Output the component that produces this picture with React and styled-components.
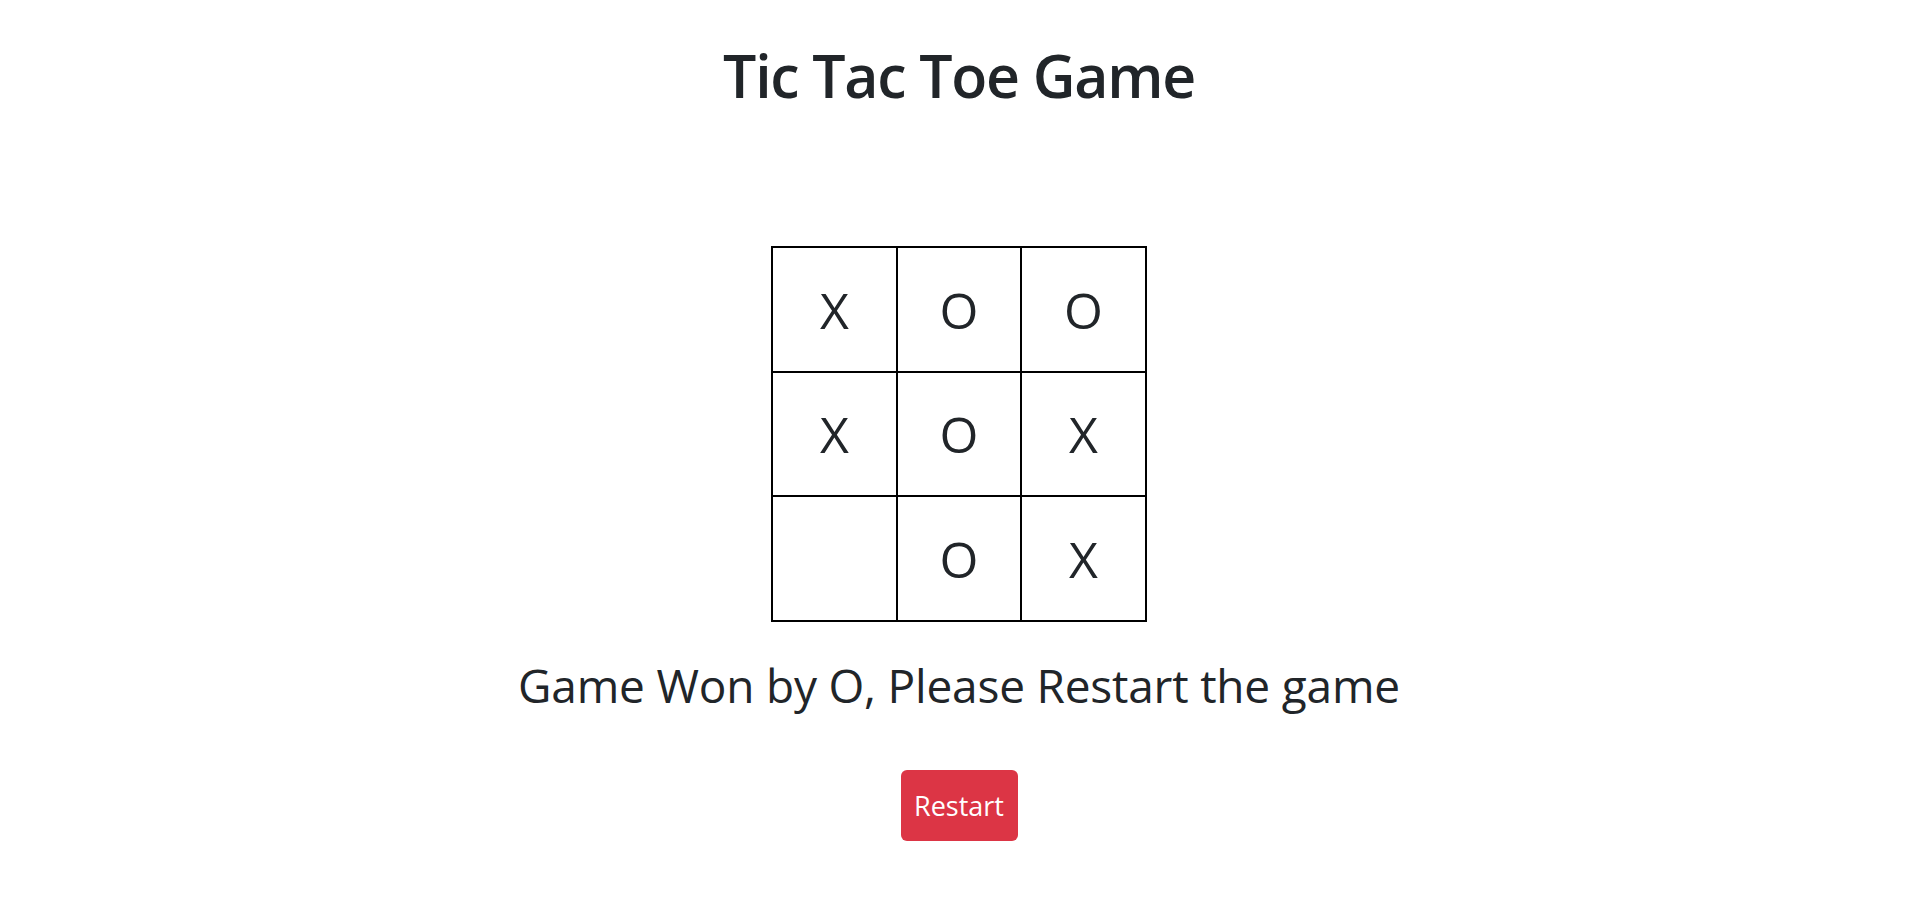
import styled, { createGlobalStyle } from 'styled-components'

const GlobalStyle = createGlobalStyle`
  body {
    margin: 0;
    background: #fff;
    font-family: "Open Sans", "Noto Sans", sans-serif;
    color: #212529;
  }
`

const Page = styled.div`
  display: flex;
  flex-direction: column;
  align-items: center;
  padding-top: 39px;
`

const Title = styled.h1`
  margin: 0;
  font-size: 59px;
  line-height: 72px;
  font-weight: 600;
  letter-spacing: -1.3px;
`

const Board = styled.div`
  display: grid;
  grid-template-columns: 123px 122px 123px;
  grid-template-rows: 123px 122px 123px;
  gap: 2px;
  padding: 2px;
  background: #000;
  margin-top: 135px;
`

const Cell = styled.div`
  display: flex;
  align-items: center;
  justify-content: center;
  background: #fff;
  font-size: 50px;
  line-height: 1;
`

const Status = styled.p`
  margin: 36px 0 0;
  font-size: 46px;
  line-height: 1.2;
  letter-spacing: -0.2px;
`

const Button = styled.button`
  margin-top: 57px;
  width: 117px;
  height: 71px;
  border: none;
  border-radius: 6px;
  background: #dc3545;
  color: #fff;
  font-family: inherit;
  font-size: 27px;
  cursor: pointer;
`

const board = ['X', 'O', 'O', 'X', 'O', 'X', '', 'O', 'X']

function App() {
  return (
    <Page>
      <GlobalStyle />
      <Title>Tic Tac Toe Game</Title>
      <Board>
        {board.map((v, i) => (
          <Cell key={i}>{v}</Cell>
        ))}
      </Board>
      <Status>Game Won by O, Please Restart the game</Status>
      <Button>Restart</Button>
    </Page>
  )
}

export default App
